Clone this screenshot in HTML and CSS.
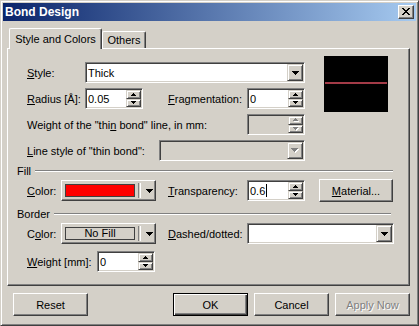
FILE: index.html
```html
<!DOCTYPE html>
<html lang="en">
<head>
    <meta charset="UTF-8">
    <title>Bond Design</title>
    <link rel="stylesheet" href="styles.css">
</head>
<body>
    <div class="window">
        <div class="titlebar">
            <span class="title">Bond Design</span>
            <div class="close">
                <svg width="8" height="7" shape-rendering="crispEdges"><path d="M0 0h2v1H0zM6 0h2v1H6zM1 1h2v1H1zM5 1h2v1H5zM2 2h4v1H2zM3 3h2v1H3zM2 4h4v1H2zM1 5h2v1H1zM5 5h2v1H5zM0 6h2v1H0zM6 6h2v1H6z"/></svg>
            </div>
        </div>

        <div class="body">
            <div class="tabs">
                <div class="tab active">Style and Colors</div>
                <div class="tab">Others</div>
            </div>

            <div class="panel">
                <div class="top">
                    <div class="grid">
                        <div class="lbl"><span><u>S</u>tyle:</span></div>
                        <div class="field combo wide">
                            <span class="value">Thick</span>
                            <div class="drop"><svg width="7" height="4" shape-rendering="crispEdges"><path d="M0 0h7v1H0zM1 1h5v1H1zM2 2h3v1H2zM3 3h1v1H3z"/></svg></div>
                        </div>

                        <div class="lbl"><span><u>R</u>adius [Å]:</span></div>
                        <div class="field spin">
                            <span class="value">0.05</span>
                            <div class="spins">
                                <div class="sbtn"><svg width="5" height="3" shape-rendering="crispEdges"><path d="M2 0h1v1H2zM1 1h3v1H1zM0 2h5v1H0z"/></svg></div>
                                <div class="sbtn"><svg width="5" height="3" shape-rendering="crispEdges"><path d="M0 0h5v1H0zM1 1h3v1H1zM2 2h1v1H2z"/></svg></div>
                            </div>
                        </div>
                        <div class="lbl col4"><span><u>F</u>ragmentation:</span></div>
                        <div class="field spin">
                            <span class="value">0</span>
                            <div class="spins">
                                <div class="sbtn"><svg width="5" height="3" shape-rendering="crispEdges"><path d="M2 0h1v1H2zM1 1h3v1H1zM0 2h5v1H0z"/></svg></div>
                                <div class="sbtn"><svg width="5" height="3" shape-rendering="crispEdges"><path d="M0 0h5v1H0zM1 1h3v1H1zM2 2h1v1H2z"/></svg></div>
                            </div>
                        </div>

                        <div class="lbl span4"><span>Weight of the "thi<u>n</u> bond" line, in mm:</span></div>
                        <div class="field spin disabled">
                            <span class="value"></span>
                            <div class="spins">
                                <div class="sbtn"><svg width="6" height="4" shape-rendering="crispEdges"><path fill="#fff" d="M3 1h1v1H3zM2 2h3v1H2zM1 3h5v1H1z"/><path fill="#808080" d="M2 0h1v1H2zM1 1h3v1H1zM0 2h5v1H0z"/></svg></div>
                                <div class="sbtn"><svg width="6" height="4" shape-rendering="crispEdges"><path fill="#fff" d="M1 1h5v1H1zM2 2h3v1H2zM3 3h1v1H3z"/><path fill="#808080" d="M0 0h5v1H0zM1 1h3v1H1zM2 2h1v1H2z"/></svg></div>
                            </div>
                        </div>

                        <div class="lbl span2"><span><u>L</u>ine style of "thin bond":</span></div>
                        <div class="field combo disabled narrow">
                            <span class="value"></span>
                            <div class="drop"><svg width="8" height="5" shape-rendering="crispEdges"><path fill="#fff" d="M1 1h7v1H1zM2 2h5v1H2zM3 3h3v1H3zM4 4h1v1H4z"/><path fill="#808080" d="M0 0h7v1H0zM1 1h5v1H1zM2 2h3v1H2zM3 3h1v1H3z"/></svg></div>
                        </div>
                    </div>

                    <div class="preview"><div class="bond"></div></div>
                </div>

                <div class="group"><span>Fill</span><div class="groove"></div></div>
                <div class="row fill-row">
                    <div class="lbl short"><span><u>C</u>olor:</span></div>
                    <div class="colorbtn">
                        <div class="swatch red"></div>
                        <div class="sep"></div>
                        <svg class="arrow" width="7" height="4" shape-rendering="crispEdges"><path d="M0 0h7v1H0zM1 1h5v1H1zM2 2h3v1H2zM3 3h1v1H3z"/></svg>
                    </div>
                    <div class="lbl mid"><span><u>T</u>ransparency:</span></div>
                    <div class="field spin">
                        <span class="value">0.6<i class="caret"></i></span>
                        <div class="spins">
                            <div class="sbtn"><svg width="5" height="3" shape-rendering="crispEdges"><path d="M2 0h1v1H2zM1 1h3v1H1zM0 2h5v1H0z"/></svg></div>
                            <div class="sbtn"><svg width="5" height="3" shape-rendering="crispEdges"><path d="M0 0h5v1H0zM1 1h3v1H1zM2 2h1v1H2z"/></svg></div>
                        </div>
                    </div>
                    <div class="button material"><u>M</u>aterial...</div>
                </div>

                <div class="group border-group"><span>Border</span><div class="groove"></div></div>
                <div class="row">
                    <div class="lbl short"><span>C<u>o</u>lor:</span></div>
                    <div class="colorbtn">
                        <div class="swatch nofill">No Fill</div>
                        <div class="sep"></div>
                        <svg class="arrow" width="7" height="4" shape-rendering="crispEdges"><path d="M0 0h7v1H0zM1 1h5v1H1zM2 2h3v1H2zM3 3h1v1H3z"/></svg>
                    </div>
                    <div class="lbl mid"><span><u>D</u>ashed/dotted:</span></div>
                    <div class="field combo dashed">
                        <span class="value"></span>
                        <div class="drop"><svg width="7" height="4" shape-rendering="crispEdges"><path d="M0 0h7v1H0zM1 1h5v1H1zM2 2h3v1H2zM3 3h1v1H3z"/></svg></div>
                    </div>
                </div>

                <div class="row weight-row">
                    <div class="lbl long"><span><u>W</u>eight [mm]:</span></div>
                    <div class="field spin">
                        <span class="value">0</span>
                        <div class="spins">
                            <div class="sbtn"><svg width="5" height="3" shape-rendering="crispEdges"><path d="M2 0h1v1H2zM1 1h3v1H1zM0 2h5v1H0z"/></svg></div>
                            <div class="sbtn"><svg width="5" height="3" shape-rendering="crispEdges"><path d="M0 0h5v1H0zM1 1h3v1H1zM2 2h1v1H2z"/></svg></div>
                        </div>
                    </div>
                </div>
            </div>

            <div class="buttons">
                <div class="button">Reset</div>
                <div class="spacer"></div>
                <div class="button default">OK</div>
                <div class="button">Cancel</div>
                <div class="button off">Apply Now</div>
            </div>
        </div>
    </div>
</body>
</html>
```

FILE: styles.css
```css
body {
    margin: 0;
    font-family: "Liberation Sans", Arial, sans-serif;
    font-size: 11px;
    color: #000;
    background-color: #d4d0c8;
}

u {
    text-decoration: underline;
    text-underline-offset: 1px;
}

/* window frame */
.window {
    box-sizing: border-box;
    width: 419px;
    height: 326px;
    padding: 2px;
    background-color: #d4d0c8;
    border: 1px solid;
    border-color: #d4d0c8 #404040 #404040 #d4d0c8;
    box-shadow: inset 1px 1px #fff, inset -1px -1px #808080;
}

.titlebar {
    height: 18px;
    display: flex;
    align-items: center;
    justify-content: space-between;
    background: linear-gradient(to right, #0a246a, #a6caf0);
}

.title {
    color: #fff;
    font-size: 12px;
    font-weight: bold;
    padding-left: 2px;
}

.close {
    box-sizing: border-box;
    width: 16px;
    height: 14px;
    margin-right: 2px;
    display: flex;
    align-items: center;
    justify-content: center;
    padding: 0 1px 1px 0;
    background-color: #d4d0c8;
    border: 1px solid;
    border-color: #fff #404040 #404040 #fff;
    box-shadow: inset -1px -1px #808080;
}

.body {
    padding: 0 4px;
}

/* tabs */
.tabs {
    height: 27px;
    display: flex;
    align-items: flex-end;
    padding-left: 2px;
}

.tab {
    box-sizing: border-box;
    height: 17px;
    width: 44px;
    display: flex;
    align-items: center;
    justify-content: center;
    background-color: #d4d0c8;
    border-top: 1px solid #fff;
    border-left: 1px solid #fff;
    border-right: 1px solid #404040;
    border-radius: 2px 2px 0 0;
    box-shadow: inset -1px 0 #808080;
}

.tab.active {
    width: 93px;
    height: 21px;
    margin-bottom: -1px;
    position: relative;
    z-index: 1;
    padding-bottom: 1px;
}

.panel {
    box-sizing: border-box;
    width: 403px;
    height: 238px;
    padding: 7px 0 0 9px;
    border: 1px solid;
    border-color: #fff #404040 #404040 #fff;
    box-shadow: inset -1px -1px #808080;
}

.top {
    display: flex;
    align-items: flex-start;
}

.grid {
    margin: 6px 0 0 10px;
    display: grid;
    grid-template-columns: 58px 58px 25px 79px 58px;
    grid-auto-rows: 21px;
    row-gap: 5px;
}

.lbl {
    display: flex;
    align-items: center;
    white-space: nowrap;
}

.col4 { grid-column: 4; }
.span4 { grid-column: 1 / 5; }
.span2 { grid-column: 1 / 3; }

/* sunken fields */
.field {
    box-sizing: border-box;
    height: 21px;
    display: flex;
    background-color: #fff;
    border: 1px solid;
    border-color: #808080 #fff #fff #808080;
    box-shadow: inset 1px 1px #404040, inset -1px -1px #d4d0c8;
}

.field.disabled {
    background-color: #d4d0c8;
}

.field .value {
    flex: 1;
    display: flex;
    align-items: center;
    padding-left: 2px;
    white-space: nowrap;
}

.wide { grid-column: 2 / 6; }

.narrow {
    grid-column: 3 / 6;
    justify-self: end;
    width: 146px;
}

.spin { width: 58px; }

.drop, .sbtn {
    box-sizing: border-box;
    display: flex;
    align-items: center;
    justify-content: center;
    background-color: #d4d0c8;
    border: 1px solid;
    border-color: #d4d0c8 #404040 #404040 #d4d0c8;
    box-shadow: inset 1px 1px #fff, inset -1px -1px #808080;
}

.drop {
    width: 16px;
    height: 17px;
    margin: 1px;
}

.spins {
    width: 15px;
    height: 17px;
    margin: 1px;
    display: flex;
    flex-direction: column;
}

.sbtn {
    flex: 1;
}

.caret {
    display: inline-block;
    width: 1px;
    height: 13px;
    margin-left: 1px;
    background-color: #000;
}

.preview {
    width: 64px;
    height: 56px;
    margin-left: 19px;
    padding-top: 26px;
    box-sizing: border-box;
    background-color: #000;
}

.bond {
    height: 2px;
    margin: 0 1px;
    background-color: #a33b47;
}

/* group headers */
.group {
    width: 376px;
    height: 13px;
    margin-top: 3px;
    display: flex;
    align-items: center;
}

.border-group {
    width: 374px;
    margin-top: 6px;
}

.groove {
    flex: 1;
    margin-left: 4px;
    border-top: 1px solid #808080;
    border-bottom: 1px solid #fff;
}

.row {
    height: 21px;
    margin: 3px 0 0 10px;
    display: flex;
    align-items: center;
}

.weight-row {
    margin-top: 7px;
}

.lbl.short { width: 34px; height: 21px; }
.lbl.mid { width: 79px; height: 21px; margin-left: 12px; }
.lbl.long { width: 70px; height: 21px; }

.colorbtn {
    box-sizing: border-box;
    width: 95px;
    height: 21px;
    display: flex;
    align-items: center;
    padding-left: 3px;
    background-color: #d4d0c8;
    border: 1px solid;
    border-color: #fff #404040 #404040 #fff;
    box-shadow: inset -1px -1px #808080, inset 1px 1px #d4d0c8;
}

.swatch {
    box-sizing: border-box;
    width: 70px;
    height: 13px;
    border: 1px solid #404040;
}

.swatch.red {
    background-color: #ff0000;
}

.swatch.nofill {
    display: flex;
    align-items: center;
    justify-content: center;
    line-height: 11px;
}

.sep {
    width: 1px;
    height: 15px;
    margin-left: 3px;
    border-left: 1px solid #808080;
    border-right: 1px solid #fff;
}

.arrow {
    margin-left: 5px;
}

.dashed {
    width: 147px;
}

/* push buttons */
.button {
    box-sizing: border-box;
    width: 75px;
    height: 23px;
    display: flex;
    align-items: center;
    justify-content: center;
    background-color: #d4d0c8;
    border: 1px solid;
    border-color: #fff #404040 #404040 #fff;
    box-shadow: inset -1px -1px #808080, inset 1px 1px #d4d0c8;
}

.button.material {
    width: 74px;
    margin-left: 14px;
}

.button.default {
    border-color: #000;
    box-shadow: inset 1px 1px #fff, inset -1px -1px #404040, inset -2px -2px #808080;
}

.button.off {
    color: #808080;
    text-shadow: 1px 1px #fff;
}

.buttons {
    width: 403px;
    margin-top: 7px;
    display: flex;
    gap: 6px;
    padding-left: 6px;
    box-sizing: border-box;
}

.spacer {
    flex: 1;
}
```
